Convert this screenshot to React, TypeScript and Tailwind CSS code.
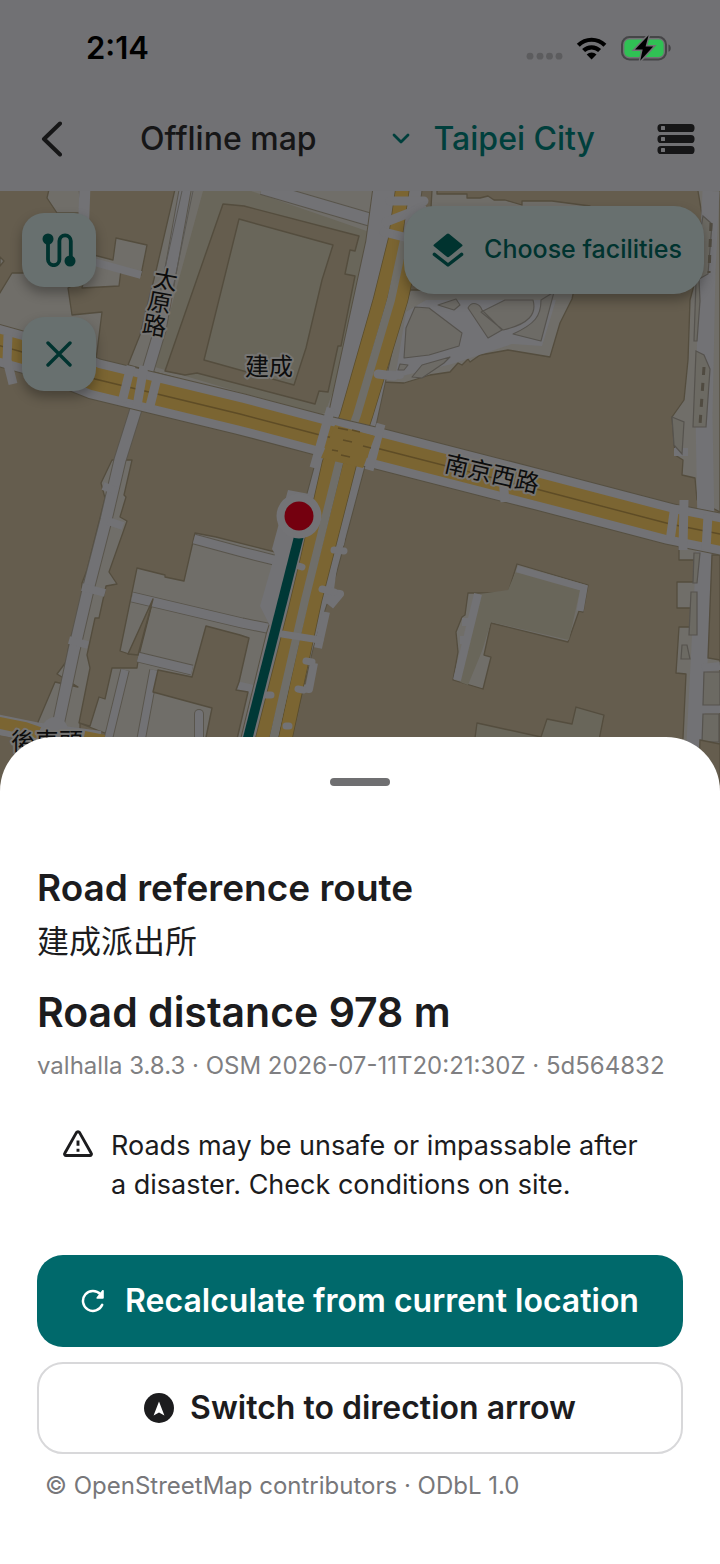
import type { ReactNode } from 'react';

const fontStack = "font-['Inter','Noto_Sans_CJK_TC',sans-serif]";

function StatusIcons() {
  return (
    <svg width="146" height="28" viewBox="526 34 146 28" aria-hidden="true">
      {[530, 540, 549.5, 559].map((x) => (
        <circle key={x} cx={x} cy="56.2" r="3.4" fill="#5c5c5e" />
      ))}
      <g fill="none" stroke="#000" strokeWidth="4.2">
        <path d="M578.3 45.2a19 19 0 0 1 26.6 0" />
        <path d="M583.6 50.6a11.4 11.4 0 0 1 16 0" />
      </g>
      <path d="M591.6 59.4l-4.9-5a7 7 0 0 1 9.8 0z" />
      <rect x="622" y="37" width="44" height="22.4" rx="7.5" fill="none" stroke="#454547" strokeWidth="2" />
      <path d="M668.5 44.4c3 1 3 6.4 0 7.4z" fill="#454547" />
      <rect x="624.4" y="39.4" width="39.2" height="17.6" rx="5" fill="#30c154" />
      <path
        d="M648.6 35.2L635 49.4h7.7l-2.5 11.4L653.2 46.4h-7.6z"
        stroke="#717174"
        strokeWidth="3"
        paintOrder="stroke"
      />
    </svg>
  );
}

function BackIcon() {
  return (
    <svg width="22" height="38" viewBox="0 0 22 38" fill="none" stroke="#161617" strokeWidth="4" strokeLinecap="round" strokeLinejoin="round" aria-hidden="true">
      <path d="M20 3.5L4 19l16 15.5" />
    </svg>
  );
}

function StorageIcon() {
  return (
    <svg width="38" height="32" viewBox="0 0 38 32" aria-hidden="true">
      {[1, 12, 23].map((y) => (
        <g key={y}>
          <rect x="0.5" y={y} width="37" height="8" rx="3.6" fill="#161617" />
          <rect x="4" y={y + 2} width="4" height="4" rx="0.6" fill="#717174" />
        </g>
      ))}
    </svg>
  );
}

function RouteIcon() {
  return (
    <svg width="34" height="34" viewBox="0 0 34 34" fill="none" aria-hidden="true">
      <path d="M6 6v20.500a5.600 5.600 0 0 0 11.400 0V8a5.600 5.600 0 0 1 11.400 0v20" stroke="#00332f" strokeWidth="3.800" />
      <circle cx="6" cy="6" r="5.500" fill="#00332f" />
      <circle cx="28" cy="28" r="5.500" fill="#00332f" />
    </svg>
  );
}

function CloseIcon() {
  return (
    <svg width="26" height="26" viewBox="0 0 26 26" fill="none" stroke="#00332f" strokeWidth="3.400" strokeLinecap="round" aria-hidden="true">
      <path d="M2 2l22 22M24 2L2 24" />
    </svg>
  );
}

function LayersIcon() {
  return (
    <svg width="32" height="34" viewBox="0 0 32 34" fill="none" aria-hidden="true">
      <path d="M17.200 .9L30 11.600a1 1 0 0 1 0 1.600L17.400 23.600a2.200 2.200 0 0 1-2.800 0L2 13.200a1 1 0 0 1 0-1.600L14.800.9a2 2 0 0 1 2.400 0z" fill="#00332f" />
      <path d="M2.400 21.400L16 32l13.600-10.600" stroke="#00332f" strokeWidth="3.400" strokeLinecap="round" strokeLinejoin="round" />
    </svg>
  );
}

function WarningIcon() {
  return (
    <svg className="mt-1 shrink-0" width="30" height="28" viewBox="0 0 30 28" fill="none" stroke="#1c1c1e" aria-hidden="true">
      <path d="M13.400 2.600a1.900 1.900 0 0 1 3.200 0l11.600 20.600a1.500 1.500 0 0 1-1.300 2.300H3.100a1.500 1.500 0 0 1-1.300-2.300z" strokeWidth="2.900" strokeLinejoin="round" />
      <path d="M15 10.400v5.400M15 18.800v3" strokeWidth="2.900" />
    </svg>
  );
}

function RefreshIcon() {
  return (
    <svg width="24" height="24" viewBox="0 0 24 24" fill="none" aria-hidden="true">
      <path d="M21.200 15.800A10 10 0 1 1 19.400 5.200" stroke="#fff" strokeWidth="2.500" strokeLinecap="round" />
      <path d="M22.800 1.600v7.200a1 1 0 0 1-1 1h-5.400c-.9 0-1.300-1-.7-1.600L21.200 1.200c.6-.6 1.600-.3 1.600.4z" fill="#fff" />
    </svg>
  );
}

function CompassIcon() {
  return (
    <svg width="30" height="30" viewBox="0 0 30 30" aria-hidden="true">
      <circle cx="15" cy="15" r="15" fill="#1c1c1e" />
      <path d="M15 8.400l5.400 14.200-5.400-3.200-5.400 3.200z" fill="#fff" />
    </svg>
  );
}

function StreetMap() {
  return (
    <svg
      className="block size-full"
      viewBox="0 191 720 610"
      preserveAspectRatio="xMidYMin slice"
      role="img"
      aria-label="Map around 建成派出所"
    >
      <rect x="0" y="191" width="720" height="610" fill="#655d4e" />

      {/* plazas and paved lots */}
      <g fill="#706e69" stroke="#544d3e" strokeWidth="1.300" strokeLinejoin="round">
        <path d="M50 185l-3 13 10 15h24l-2-28z" />
        <path d="M12 273h84l-28 15 4 27 30-3-5 40-2 14-73-26-24-14v-30z" />
        <path d="M116 238l31 7-6 30-20-5-2 16-37 2 8-34 23 6z" />
        <path d="M0 257l4 4-4 5z" />
        <path d="M176 185h214l-8 70-36 170-90-25-128-35 12-30 16-64z" />
        <path d="M432 190h5v4h30v4h13l8-2 6 4h11l17 5v-4h30l38 5v20H430z" />
        <path d="M410 290h164l-2 9-12 24-10 34-42-7-28 5-10 7-2-3-6 6-4-2-8 9-20 3-26 8-22-1z" />
        <path d="M112 460l-11 23 4 15-18 72-5 13-1 22-11 35-4 22-9 12 21 13-23-5-17 40v28h42v-27l10 3 9-29 6 2 7-31h25l2-13 14-55-24 54-9-3 17-83 28 7v2l19 4 11-48 21 4 67 17 20 6-52 200H110V735l-31-12 11-55-3-13 8-37h4l7-32 11-2-8-12 18-51-7-4 6-20-2-2 8-35z" />
        <path d="M517 564l71 21-5 27-4-1-11 31-77-19-7 32 7 2-8 32-30-9 5-28-2-20 6-15 3-2 3-22h40z" />
        <path d="M477 723l64 14 6-18 25 5 4-17 28 8-12 60H470z" fill="#69665a" />
        <path d="M697 185l5 30-4 55-8 30-2 60-4 40-12 17 3 38 8 5-1 15 13 3 2 22 23 12V185z" />
        <path d="M679 545v15h15v22h-17v26h17v19h-15l-3 46 10 1-3 64-4 64h41V545z" />
      </g>
      <path d="M516 571l64 19-11 50-78-18-9 29-14 34-8-3 20-88 28-4z" fill="#69665a" />
      <path d="M517 569l67 19-4 23" fill="none" stroke="#727275" strokeWidth="7" />
      <path d="M478 594l-21 86" stroke="#727275" strokeWidth="8" />
      <path d="M462 622h8M460 640h8" stroke="#727275" strokeWidth="8" />

      {/* school grounds */}
      <path d="M203 191h48l130 45-20 80-36 97-8 2-162-48z" fill="#69665a" />
      <g stroke="#544d3e" strokeWidth="1.400" strokeLinejoin="round">
        <path d="M223 204l21 2 115 30-4 15-5-1-5 24 10 2-14 70-3 0-10 46-9-1-4 13-118-31-12 2-20-4z" fill="#655d4e" />
        <path d="M239 219l94 26-11 35-16 68-12 37-90-25z" fill="#69665a" />
      </g>

      {/* side streets */}
      <g fill="none" stroke="#59554c">
        <path d="M186 185l-26 145-18 60-22 70-14 60-18 70-14 60-17 80" strokeWidth="13" />
        <path d="M194 539l48 13 48 12M132 597l110 26 40 8M138 657l54 13" strokeWidth="11" />
        <path d="M125 670l-17 70M154 670l-13 70" strokeWidth="9.500" />
        <path d="M262 188l58 17 65 19" strokeWidth="14" />
      </g>
      <g fill="none" stroke="#727275" strokeWidth="11">
        <path d="M186 185l-26 145-18 60-22 70-14 60-18 70-14 60-17 80" />
        <path d="M85 185l-2 55" />
        <path d="M94 262l47 13" strokeWidth="8" />
        <path d="M194 539l48 13 48 12M132 597l110 26 40 8M138 657l54 13" strokeWidth="9" />
        <path d="M125 670l-17 70M154 670l-13 70" strokeWidth="7.500" />
        <path d="M103 486l14 5M108 521l15 5M82 587l23 6M69 640l19 5" strokeWidth="8" />
        <path d="M262 188l58 17 65 19" strokeWidth="12" />
        <path d="M238 686l40 9" strokeWidth="9" />
      </g>
      <path d="M182 191l-22 100M193 191l-21 102" fill="none" stroke="#5a5854" />

      {/* blocks between the lots */}
      <g fill="#655d4e" stroke="#544d3e" strokeWidth="1.400" strokeLinejoin="round">
        <path d="M206 626l34 9 9 3-10 44-3 8 12 2-14 60h-31l9-44-59-16 5-22 34 7z" />
        <path d="M153 599l-25 55 10 1z" />
      </g>
      <path d="M199 714v30" stroke="#59554c" strokeWidth="10" strokeLinecap="round" />
      <path d="M199 714v30" stroke="#727275" strokeWidth="8" strokeLinecap="round" />

      {/* park paths */}
      <path d="M396 372l10-60 20-12h130l-14 46-30-2-60 20-50 12z" fill="#727275" />
      <g fill="#6d6b66" stroke="#56534e" strokeWidth="1.100" strokeLinejoin="round">
        <path d="M415 307l14 1 33 25-3 13-30 9-25 3 2-30z" />
        <path d="M438 305l18-6 4 6-6 5zM468 308c4-8 12-4 14 2l20 20-14 8zM505 300h28c4 14-4 24-30 30l-22-18z" />
        <path d="M554 292l-13 49-28-7c22-10 28-18 28-34z" />
        <path d="M400 364l8 1-4 5h-6zM412 377l10-12 28-8-6 6-22 15z" />
      </g>
      <path d="M378 374l22 1" stroke="#727275" strokeWidth="8" strokeLinecap="round" />

      {/* east street */}
      <path d="M711 191l-4 80-3 145 2 110-4 80-10 195" fill="none" stroke="#727275" strokeWidth="17" />
      <path d="M674 452h14M702 668l18-2M702 709h18" stroke="#727275" strokeWidth="8" />
      <g fill="#6c6a63" stroke="#56534e" strokeWidth="1.200">
        <path d="M703 216l9 8-4 50-9 5 1 22-3 40h-3l3-90z" />
        <path d="M696 351l8 4 6 14-4 58h-13zM672 417l12 5-2 32-8-9z" />
        <path d="M694 553h6l-3 30h-4zM691 592h6v43h-8zM682 645h5l3 14h-9z" />
        <path d="M704 672h16v33h-17zM703 714h16v28h-17z" />
      </g>
      <path d="M712 555l-4 103 12 2V555zM700 740l20 4v56h-22z" fill="#655d4e" stroke="#544d3e" strokeWidth="1.300" />
      <path d="M711 223l-2 50M704 367l-4 58" stroke="#504b41" strokeWidth="3" strokeDasharray="8 8" />

      {/* boulevard, north to south */}
      <path d="M398 185l-8 60-40 185-10 35-28 105-22 70-28 115" fill="none" stroke="#565042" strokeWidth="50" strokeLinejoin="round" />
      <g fill="none" stroke="#727275" strokeLinejoin="round">
        <path d="M398 185l-8 60-40 185-10 35-28 105-22 70-28 115" strokeWidth="48" />
        <path d="M350 480l-10 65M334 560l-6 44M322 592l18 2-10 12M326 612l-8 36M314 663l-5 26-16-2" strokeWidth="8" />
      </g>
      <path d="M288 490l32 6-20 100-30 30-10-20 15-52-3-5z" fill="#727275" />
      <g fill="none" stroke="#5a4d2c" strokeWidth="14.500" strokeLinejoin="round">
        <path d="M403 185l-8 55-15 60-33 115-18 48-22 97-12 50-33 130" />
        <path d="M412 250l-11 50-35 115-16 48-35 137-30 140" />
      </g>
      <g fill="none" stroke="#7b6532" strokeWidth="13" strokeLinejoin="round">
        <path d="M403 185l-8 55-15 60-33 115-18 48-22 97-12 50-33 130" />
        <path d="M412 250l-11 50-35 115-16 48-35 137-30 140" />
      </g>
      <path d="M404 240l-13 60-34 115-18 48-34 137-32 140" fill="none" stroke="#6f6e69" strokeWidth="8" />
      <g stroke="#727275" strokeWidth="9" strokeLinecap="round">
        <path d="M390 201h34M386 222l36-14M384 232l24 6M378 374l16 2" />
        <path d="M282 634l38 6M334 550l10 1M322 589l12 3M302 567l-10-3M306 661l6 1M298 689l5 1M271 695h-6M286 726h3" strokeWidth="7" />
      </g>

      {/* avenue, west to east */}
      <path d="M-10 343l50 14 55 22 145 35 80 21 60 14 160 41 130 34 60 12" fill="none" stroke="#565042" strokeWidth="42" />
      <path d="M-10 343l50 14 55 22 145 35 80 21 60 14 160 41 130 34 60 12" fill="none" stroke="#727275" strokeWidth="40" />
      <path d="M-10 343l50 14 55 22 145 35 80 21 60 14 160 41 130 34 60 12" fill="none" stroke="#7b6532" strokeWidth="23" />
      <path d="M-10 343l50 14 55 22 145 35 80 21 60 14 160 41 130 34 60 12" fill="none" stroke="#5e4c26" strokeWidth="1.400" />
      <g fill="none" stroke="#727275" strokeWidth="9">
        <path d="M131 366l-9 36M144 366l-7 40M158 374l-9 36M8 335l-1 25 6 24" />
        <path d="M331 408l-17 60M381 424l-12 46" />
        <path d="M503 478l2 24M675 505l-5 36M684 500l-1 50M708 515l-2 35" />
      </g>
      <path d="M335 425l40 11-12 32-42-10z" fill="#7b6532" />
      <path d="M338 428l10 2M352 430l8 2M343 440l9 2M363 446l8 2M341 455l9 2M332 450l6 1" stroke="#5e4c26" strokeWidth="1.500" />

      {/* street in the south-west corner */}
      <path d="M-5 724l45 9 60 8" fill="none" stroke="#727275" strokeWidth="20" />
      <path d="M-5 722l30 6 14 5M84 737l20 4" fill="none" stroke="#7b6532" strokeWidth="12" />
      <path d="M-5 735l60 10v60H-5z" fill="#655d4e" />
      <path d="M38 740c2-26 24-30 30-12v14z" fill="#727275" />

      {/* route */}
      <path d="M299 536l-52 205" stroke="#003836" strokeWidth="9.500" />
      <circle cx="299" cy="516" r="22.500" fill="#737376" />
      <circle cx="299" cy="516" r="14.500" fill="#74000f" />

      <g
        className="font-['Noto_Sans_CJK_TC',sans-serif] text-[24px]"
        fill="#0d0d0d"
        stroke="#767573"
        strokeWidth="4"
        strokeLinejoin="round"
        paintOrder="stroke"
        textAnchor="middle"
      >
        <text transform="translate(164 288) rotate(10)">太</text>
        <text transform="translate(158 311) rotate(10)">原</text>
        <text transform="translate(153 334) rotate(10)">路</text>
        <text x="269" y="375">建成</text>
        <text transform="translate(490 482) rotate(13)">南京西路</text>
        <text x="47" y="750">後車頭</text>
      </g>
    </svg>
  );
}

function MapButton({ label, children }: { label: string; children: ReactNode }) {
  return (
    <button
      type="button"
      aria-label={label}
      className="flex size-[74px] items-center justify-center rounded-[22px] bg-[#68706f] shadow-[0_6px_12px_rgba(0,0,0,0.3)]"
    >
      {children}
    </button>
  );
}

export default function App() {
  return (
    <main className={`flex min-h-screen flex-col bg-[#655d4e] ${fontStack}`}>
      <header className="bg-[#717174] text-[#161617]">
        <div className="flex h-24 items-center justify-between pr-12 pl-[86px]">
          <time className="text-[31px] font-semibold text-black">2:14</time>
          <StatusIcons />
        </div>
        <div className="flex h-[95px] items-start pr-[25px] pl-10">
          <button type="button" aria-label="Back" className="flex h-[86px] w-[100px] items-center">
            <BackIcon />
          </button>
          <h1 className="flex h-[86px] flex-1 items-center text-[32px] font-medium">Offline map</h1>
          <button type="button" className="flex h-[86px] items-center gap-6 text-[32px] font-medium text-[#003f3c]">
            <svg width="18" height="12" viewBox="0 0 18 12" fill="none" stroke="#003f3c" strokeWidth="2.800" strokeLinecap="round" strokeLinejoin="round" aria-hidden="true">
              <path d="M2 2l7 7 7-7" />
            </svg>
            Taipei City
          </button>
          <button type="button" aria-label="Offline map storage" className="ml-[62px] flex h-[86px] items-center">
            <StorageIcon />
          </button>
        </div>
      </header>

      <section className="relative h-[610px]">
        <StreetMap />
        <div className="absolute inset-x-0 top-0 flex items-start justify-between pt-[15px] pr-4 pl-[22px]">
          <div className="flex flex-col gap-[30px] pt-[7px]">
            <MapButton label="Show route">
              <RouteIcon />
            </MapButton>
            <MapButton label="Close route">
              <CloseIcon />
            </MapButton>
          </div>
          <button
            type="button"
            className="flex h-[88px] items-center gap-5 rounded-[30px] bg-[#68706f] pr-[22px] pl-7 text-[25px] font-medium text-[#00332f] shadow-[0_6px_12px_rgba(0,0,0,0.3)]"
          >
            <LayersIcon />
            Choose facilities
          </button>
        </div>
      </section>

      <section className="relative -mt-16 flex flex-1 flex-col rounded-t-[54px] bg-white px-[37px] pt-[41px] pb-[62px] text-[#1c1c1e]">
        <div className="h-2 w-[60px] self-center rounded-full bg-[#6f6f71]" />
        <h2 className="mt-[76px] text-[37px] leading-[52px] font-semibold">Road reference route</h2>
        <p className="text-[32px] leading-[56px]">建成派出所</p>
        <p className="mt-4 text-[41px] leading-[52px] font-semibold">Road distance 978 m</p>
        <p className="mt-2 text-[24px] leading-10 text-[#7f7f82]">
          valhalla 3.8.3 · OSM 2026-07-11T20:21:30Z · 5d564832
        </p>
        <div className="mt-10 flex gap-[18px] px-[26px]">
          <WarningIcon />
          <p className="text-[27px] leading-[39px]">
            Roads may be unsafe or impassable after a disaster. Check conditions on site.
          </p>
        </div>
        <div className="mt-[51px] flex flex-col gap-[15px]">
          <button
            type="button"
            className="flex h-[92px] items-center justify-center gap-5 rounded-[26px] bg-[#00696b] text-[32px] font-semibold text-white"
          >
            <RefreshIcon />
            Recalculate from current location
          </button>
          <button
            type="button"
            className="flex h-[92px] items-center justify-center gap-4 rounded-[26px] border-2 border-[#d8d8da] text-[32px] font-semibold"
          >
            <CompassIcon />
            Switch to direction arrow
          </button>
        </div>
        <a href="#osm" className="mt-4 self-start pl-2 text-[24px] leading-8 text-[#77777a]">
          © OpenStreetMap contributors · ODbL 1.0
        </a>
      </section>
    </main>
  );
}
